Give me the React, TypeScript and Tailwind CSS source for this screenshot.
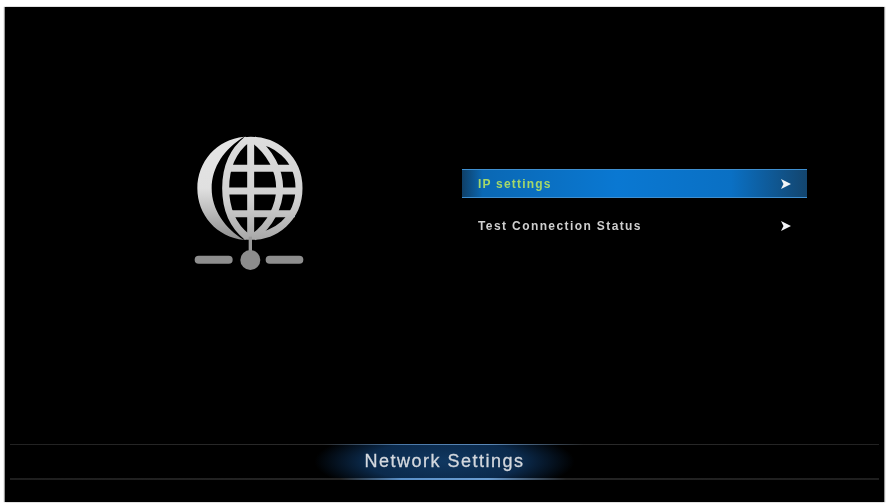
function GlobeIcon() {
  return (
    <svg viewBox="0 0 480 480" className="h-[160px] w-[160px] blur-[0.7px]">
      <defs>
        <linearGradient id="globeFill" gradientUnits="userSpaceOnUse" x1="0" y1="50" x2="0" y2="400">
          <stop offset="0" stopColor="#dedede" />
          <stop offset="0.55" stopColor="#d0d0d0" />
          <stop offset="1" stopColor="#9a9a9a" />
        </linearGradient>
        <linearGradient id="crescentFill" gradientUnits="userSpaceOnUse" x1="0" y1="50" x2="0" y2="360">
          <stop offset="0" stopColor="#e4e4e4" />
          <stop offset="0.5" stopColor="#e0e0e0" />
          <stop offset="1" stopColor="#8f8f8f" />
        </linearGradient>
      </defs>
      {/* left crescent */}
      <path
        d="M222 50 C140 58 82 125 82 205 C82 285 140 352 222 360 C165 325 125 270 125 205 C125 140 165 85 222 50 Z"
        fill="url(#crescentFill)"
      />
      <g fill="none" stroke="url(#globeFill)" strokeWidth="21">
        {/* outer edge, right side */}
        <path d="M222 62 C320 52 387 120 387 205 C387 290 320 358 222 348" />
        {/* left and right meridians */}
        <path d="M232 58 C185 95 167 150 167 205 C167 260 185 315 232 352" />
        <path d="M250 58 C300 95 329 150 329 205 C329 260 300 315 250 352" />
        <path d="M242 55 L242 352" />
        <path d="M175 145 L378 145" />
        <path d="M167 213 L389 213" />
        <path d="M178 281 L375 281" />
      </g>
      {/* network node */}
      <path d="M236 350 L246 350 L246 400 L236 400 Z" fill="#9a9a9a" />
      <rect x="74" y="407" width="114" height="24" rx="12" fill="#8e8e8e" />
      <rect x="287" y="407" width="113" height="24" rx="12" fill="#8e8e8e" />
      <circle cx="241" cy="420" r="30" fill="#8c8c8c" />
    </svg>
  );
}

function Arrow() {
  return (
    <svg viewBox="0 0 12 12" className="h-3 w-3 blur-[0.4px]">
      <path d="M1 1 L11 6 L1 11 L3.5 6 Z" fill="#f2f4f6" />
    </svg>
  );
}

export default function App() {
  return (
    <div className="h-[504px] w-full overflow-hidden bg-white pb-[2px] pl-[5px] pr-[3px] pt-[7px] font-['Liberation_Sans',sans-serif]">
      <div className="flex h-full flex-col bg-black shadow-[-1px_0_1px_#999,1px_0_1px_#999]">
        <div className="flex h-[437px] items-start">
          <div className="ml-[165px] mt-[113px]">
            <GlobeIcon />
          </div>
          <div className="ml-[132px] mt-[162px] w-[345px]">
            <div className="flex h-[29px] items-center justify-between border-y border-[#3f8fd0] bg-[linear-gradient(90deg,#0f3f66_0%,#0a68b4_6%,#0a78d2_45%,#0a70c4_78%,#13456e_100%)] pl-[16px] pr-[15px]">
              <span className="text-[12px] font-bold tracking-[1.2px] text-[#a4d86a] blur-[0.5px]">IP settings</span>
              <Arrow />
            </div>
            <div className="mt-[13px] flex h-[29px] items-center justify-between pl-[16px] pr-[15px]">
              <span className="text-[12px] font-bold tracking-[1.4px] text-[#cfcfcf] blur-[0.5px]">
                Test Connection Status
              </span>
              <Arrow />
            </div>
          </div>
        </div>
        <div className="mx-[5px] flex h-[36px] flex-col">
          <div className="h-px bg-[linear-gradient(90deg,#222_0%,#2a2a2a_36%,#4a78a8_45%,#5a88b8_55%,#2a2a2a_66%,#222_100%)]" />
          <div className="flex flex-1 items-center justify-center bg-[radial-gradient(ellipse_130px_34px_at_center,#103760_0%,#0b2a4c_60%,#000000_100%)]">
            <span className="text-[18px] tracking-[1.5px] text-[#d4d8de] blur-[0.4px] [-webkit-text-stroke:0.3px_#d4d8de]">
              Network Settings
            </span>
          </div>
          <div className="h-[2px] bg-[linear-gradient(90deg,#1e1e1e_0%,#242424_38%,#5a90c8_45%,#6a9cd0_55%,#242424_64%,#1e1e1e_100%)]" />
        </div>
      </div>
    </div>
  );
}
